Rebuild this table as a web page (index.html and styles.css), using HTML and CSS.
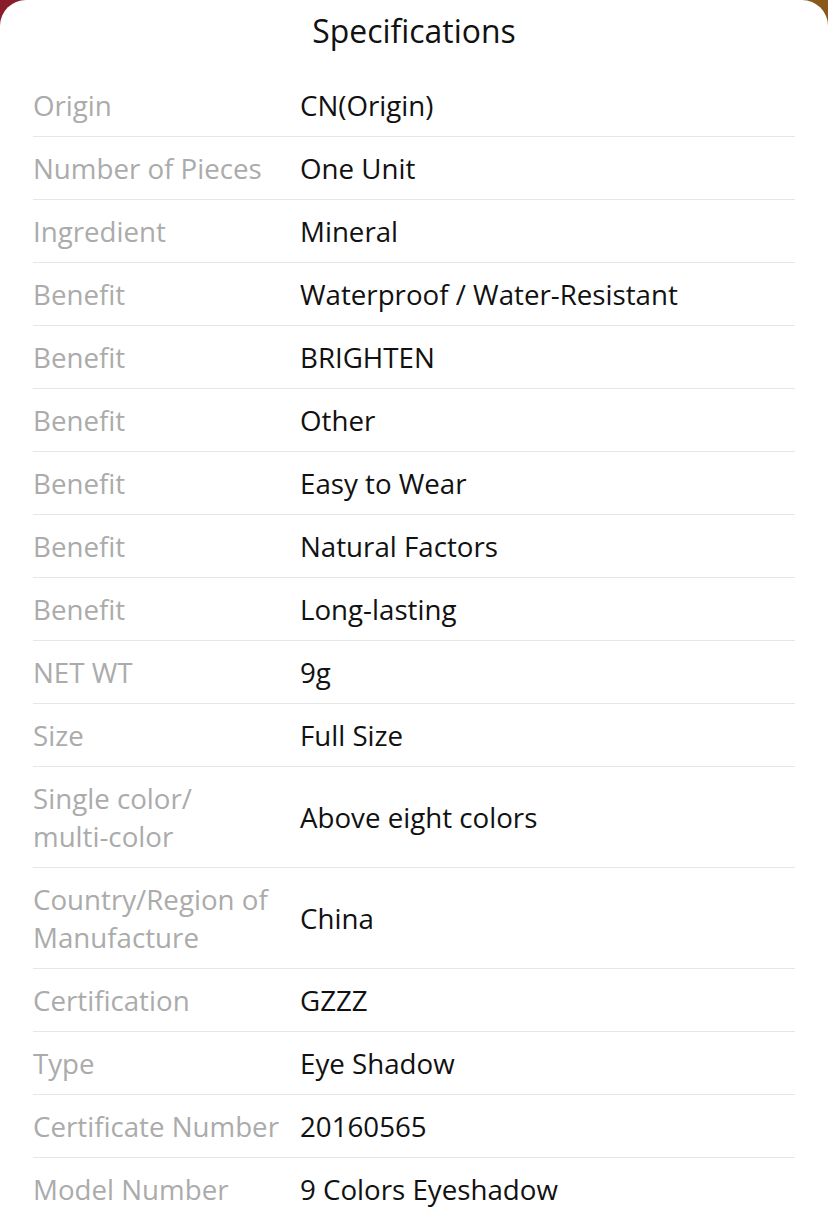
FILE: index.html
```html
<!DOCTYPE html>
<html>
<head>
<meta charset="utf-8">
<link rel="stylesheet" href="styles.css">
</head>
<body>
<div class="sheet">
  <h1 class="title">Specifications</h1>
  <div class="specs">
    <div class="row"><div class="k">Origin</div><div class="v">CN(Origin)</div></div>
    <div class="row"><div class="k">Number of Pieces</div><div class="v">One Unit</div></div>
    <div class="row"><div class="k">Ingredient</div><div class="v">Mineral</div></div>
    <div class="row"><div class="k">Benefit</div><div class="v">Waterproof / Water-Resistant</div></div>
    <div class="row"><div class="k">Benefit</div><div class="v">BRIGHTEN</div></div>
    <div class="row"><div class="k">Benefit</div><div class="v">Other</div></div>
    <div class="row"><div class="k">Benefit</div><div class="v">Easy to Wear</div></div>
    <div class="row"><div class="k">Benefit</div><div class="v">Natural Factors</div></div>
    <div class="row"><div class="k">Benefit</div><div class="v">Long-lasting</div></div>
    <div class="row"><div class="k">NET WT</div><div class="v">9g</div></div>
    <div class="row"><div class="k">Size</div><div class="v">Full Size</div></div>
    <div class="row"><div class="k">Single color/<wbr><span class="nw">multi-color</span></div><div class="v">Above eight colors</div></div>
    <div class="row"><div class="k">Country/Region of Manufacture</div><div class="v">China</div></div>
    <div class="row"><div class="k">Certification</div><div class="v">GZZZ</div></div>
    <div class="row"><div class="k">Type</div><div class="v">Eye Shadow</div></div>
    <div class="row"><div class="k">Certificate Number</div><div class="v">20160565</div></div>
    <div class="row"><div class="k">Model Number</div><div class="v">9 Colors Eyeshadow</div></div>
  </div>
</div>
</body>
</html>
```

FILE: styles.css
```css
html, body {
  margin: 0;
  padding: 0;
}
body {
  background: linear-gradient(90deg, #8a1c2c 0%, #7a3a22 60%, #8a5a1c 100%);
  font-family: "Open Sans", "Noto Sans", sans-serif;
  height: 1211px;
  overflow: hidden;
}
.sheet {
  background: #fff;
  border-radius: 26px 26px 0 0;
  padding: 0 33px;
  min-height: 1211px;
  box-sizing: border-box;
}
.title {
  margin: 0;
  height: 74px;
  box-sizing: border-box;
  padding-top: 9px;
  text-align: center;
  font-size: 31.9px;
  font-weight: 400;
  line-height: 44px;
  color: #111;
}
.specs {
  display: flex;
  flex-direction: column;
}
.row {
  display: grid;
  grid-template-columns: 255px 1fr;
  column-gap: 12px;
  align-items: center;
  padding: 12px 0;
  border-bottom: 1px solid #e6e6e6;
  font-size: 27.7px;
  line-height: 38px;
}
.row:last-child {
  border-bottom: none;
}
.k {
  color: #ababab;
}
.nw {
  white-space: nowrap;
}
.v {
  color: #111;
}
```
